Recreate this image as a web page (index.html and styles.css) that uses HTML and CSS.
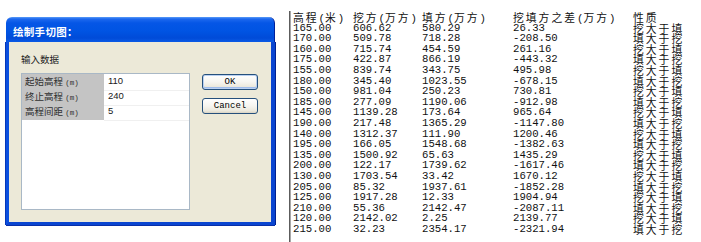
FILE: index.html
```html
<!DOCTYPE html>
<html lang="zh-CN">
<head>
<meta charset="utf-8">
<title>绘制手切图</title>
<link rel="stylesheet" href="styles.css">
</head>
<body>
<div class="page">
  <div class="dialog">
    <div class="titlebar">绘制手切图：</div>
    <div class="dlgbody">
      <div class="section-label">输入数据</div>
      <div class="dlgrow">
        <div class="propgrid">
          <div class="prow"><div class="plabel">起始高程 <span class="unit">(m)</span></div><div class="pval">110</div></div>
          <div class="prow"><div class="plabel">终止高程 <span class="unit">(m)</span></div><div class="pval">240</div></div>
          <div class="prow"><div class="plabel">高程间距 <span class="unit">(m)</span></div><div class="pval">5</div></div>
        </div>
        <div class="buttons">
          <button class="btn btn-default">OK</button>
          <button class="btn">Cancel</button>
        </div>
      </div>
    </div>
  </div>

  <div class="textpanel">
    <div class="trow head"><span><span class="c">高程</span>(<span class="c">米</span>)</span><span><span class="c">挖方</span>(<span class="c">万方</span>)</span><span><span class="c">填方</span>(<span class="c">万方</span>)</span><span><span class="c">挖填方之差</span>(<span class="c">万方</span>)</span><span><span class="c">性质</span></span></div>
    <div class="trow"><span>165.00</span><span>606.62</span><span>580.29</span><span>26.33</span><span class="c">挖大于填</span></div>
    <div class="trow"><span>170.00</span><span>509.78</span><span>718.28</span><span>-208.50</span><span class="c">填大于挖</span></div>
    <div class="trow"><span>160.00</span><span>715.74</span><span>454.59</span><span>261.16</span><span class="c">挖大于填</span></div>
    <div class="trow"><span>175.00</span><span>422.87</span><span>866.19</span><span>-443.32</span><span class="c">填大于挖</span></div>
    <div class="trow"><span>155.00</span><span>839.74</span><span>343.75</span><span>495.98</span><span class="c">挖大于填</span></div>
    <div class="trow"><span>180.00</span><span>345.40</span><span>1023.55</span><span>-678.15</span><span class="c">填大于挖</span></div>
    <div class="trow"><span>150.00</span><span>981.04</span><span>250.23</span><span>730.81</span><span class="c">挖大于填</span></div>
    <div class="trow"><span>185.00</span><span>277.09</span><span>1190.06</span><span>-912.98</span><span class="c">填大于挖</span></div>
    <div class="trow"><span>145.00</span><span>1139.28</span><span>173.64</span><span>965.64</span><span class="c">挖大于填</span></div>
    <div class="trow"><span>190.00</span><span>217.48</span><span>1365.29</span><span>-1147.80</span><span class="c">填大于挖</span></div>
    <div class="trow"><span>140.00</span><span>1312.37</span><span>111.90</span><span>1200.46</span><span class="c">挖大于填</span></div>
    <div class="trow"><span>195.00</span><span>166.05</span><span>1548.68</span><span>-1382.63</span><span class="c">填大于挖</span></div>
    <div class="trow"><span>135.00</span><span>1500.92</span><span>65.63</span><span>1435.29</span><span class="c">挖大于填</span></div>
    <div class="trow"><span>200.00</span><span>122.17</span><span>1739.62</span><span>-1617.46</span><span class="c">填大于挖</span></div>
    <div class="trow"><span>130.00</span><span>1703.54</span><span>33.42</span><span>1670.12</span><span class="c">挖大于填</span></div>
    <div class="trow"><span>205.00</span><span>85.32</span><span>1937.61</span><span>-1852.28</span><span class="c">填大于挖</span></div>
    <div class="trow"><span>125.00</span><span>1917.28</span><span>12.33</span><span>1904.94</span><span class="c">挖大于填</span></div>
    <div class="trow"><span>210.00</span><span>55.36</span><span>2142.47</span><span>-2087.11</span><span class="c">填大于挖</span></div>
    <div class="trow"><span>120.00</span><span>2142.02</span><span>2.25</span><span>2139.77</span><span class="c">挖大于填</span></div>
    <div class="trow"><span>215.00</span><span>32.23</span><span>2354.17</span><span>-2321.94</span><span class="c">填大于挖</span></div>
  </div>
</div>
</body>
</html>
```

FILE: styles.css
```css
html, body {
  margin: 0;
  padding: 0;
  background: #ffffff;
}

.page {
  display: flex;
  align-items: flex-start;
  width: 701px;
  height: 242px;
  overflow: hidden;
}

/* ---------- dialog ---------- */
.dialog {
  flex: 0 0 269px;
  margin-left: 6px;
  margin-top: 17px;
  width: 269px;
  display: flex;
  flex-direction: column;
}

.titlebar {
  height: 25px;
  box-sizing: border-box;
  padding: 3px 0 0 7px;
  display: flex;
  align-items: center;
  border-radius: 6px 6px 0 0;
  background: linear-gradient(to bottom, #5a9cf8 0px, #1d68ee 2px, #0556e6 6px, #0054e3 14px, #004bd8 21px, #0a5ae6 25px);
  border-right: 1px solid #00209a;
  color: #ffffff;
  font-family: "Noto Sans CJK SC", "Noto Sans", sans-serif;
  font-weight: 700;
  font-size: 10.5px;
  letter-spacing: 0.3px;
}

.dlgbody {
  height: 183px;
  box-sizing: border-box;
  background: #ece9d8;
  border-left: 3px solid #0b4fdf;
  border-right: 4px solid #0a45d0;
  border-bottom: 3px solid #0a45d0;
  box-shadow: -1px 0 0 #0637b8, 1px 0 0 #00208f, 0 1px 0 #0a2fa8;
  padding: 10px 0 0 12px;
}

.section-label {
  height: 14px;
  line-height: 14px;
  font-family: "Noto Sans CJK SC", sans-serif;
  font-size: 9.5px;
  color: #222222;
}

.dlgrow {
  display: flex;
  align-items: flex-start;
  margin-top: 7px;
}

.propgrid {
  flex: 0 0 169px;
  width: 169px;
  height: 137px;
  box-sizing: border-box;
  border: 1px solid #a9b8c6;
  background: #ffffff;
  display: flex;
  flex-direction: column;
}

.prow {
  display: grid;
  grid-template-columns: 82px 1fr;
  height: 15px;
  flex: 0 0 15px;
  box-sizing: border-box;
}

.plabel {
  background: #c4c4c4;
  border-bottom: 1px solid #ffffff;
  padding-left: 3px;
  line-height: 14px;
  font-family: "Noto Sans CJK SC", sans-serif;
  font-size: 9.5px;
  color: #303030;
  white-space: nowrap;
}

.unit {
  font-family: "Liberation Mono", monospace;
  font-size: 7.5px;
}

.pval {
  border-bottom: 1px solid #f0f0f0;
  padding-left: 4px;
  line-height: 14px;
  font-family: "Liberation Sans", sans-serif;
  font-size: 9.5px;
  color: #202020;
}

.buttons {
  flex: 0 0 56px;
  display: flex;
  flex-direction: column;
  gap: 8px;
  margin-left: 12px;
  margin-top: 1px;
}

.btn {
  width: 56px;
  height: 16px;
  padding: 0;
  margin: 0;
  border: 1px solid #25507c;
  border-radius: 3px;
  background: linear-gradient(to bottom, #ffffff 0%, #f6f5f0 50%, #ebe8dc 85%, #d8d3c4 100%);
  font-family: "Liberation Mono", monospace;
  font-size: 9px;
  color: #000000;
  line-height: 14px;
}

.btn-default {
  box-shadow: inset 0 0 0 1px #b9d0f1, inset 0 -1px 0 1px #9fbceb;
}

/* ---------- text output ---------- */
.textpanel {
  flex: 0 0 auto;
  margin-left: 14px;
  margin-top: 11px;
  height: 231px;
  border-left: 1px solid #5c5c5c;
  box-shadow: inset 1px 0 0 #a8a8a8;
  padding-left: 3px;
  padding-top: 1px;
  font-family: "Liberation Mono", "Noto Sans CJK SC", monospace;
  font-size: 10.67px;
  color: #111111;
}

.trow {
  display: grid;
  grid-template-columns: 60px 69px 91px 120px 70px;
  height: 10.6px;
  line-height: 10.6px;
  white-space: nowrap;
}

.c {
  font-family: "Noto Sans CJK SC", sans-serif;
  font-size: 10.8px;
  letter-spacing: 2px;
  line-height: 10.6px;
}
```
